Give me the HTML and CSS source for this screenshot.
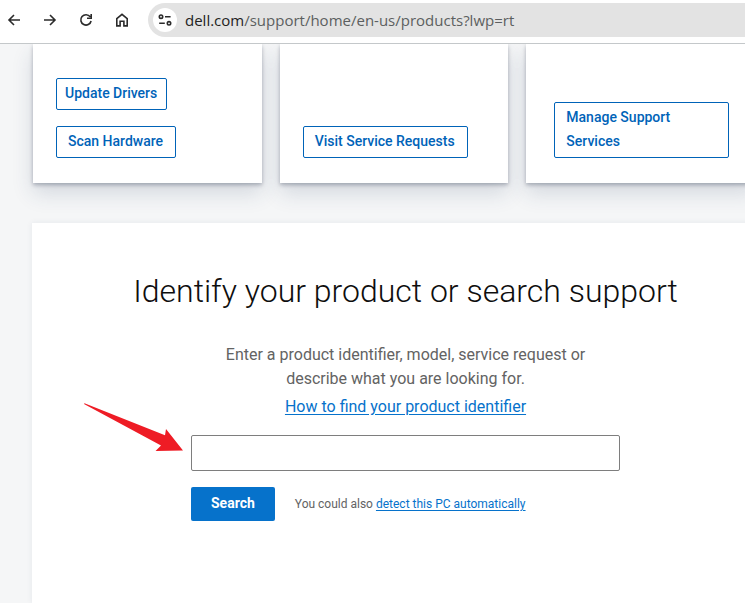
FILE: index.html
```html
<!DOCTYPE html>
<html lang="en">
  <head>
    <meta charset="UTF-8" />
    <meta name="viewport" content="width=device-width, initial-scale=1.0" />
    <title>Support | Dell US</title>
    <link rel="stylesheet" href="styles.css">
  </head>
  <body>
    <header class="toolbar">
      <button class="nav" aria-label="Back">
        <svg viewBox="0 0 16 16"><path d="M14 8H3M8 3L3 8l5 5" /></svg>
      </button>
      <button class="nav" aria-label="Forward">
        <svg viewBox="0 0 16 16"><path d="M2 8h11M8 3l5 5-5 5" /></svg>
      </button>
      <button class="nav" aria-label="Reload">
        <svg viewBox="0 0 16 16"><path d="M12.2 4.8A5.2 5.2 0 1 0 13.1 9M13.2 2v4.2H9" /></svg>
      </button>
      <button class="nav" aria-label="Home">
        <svg viewBox="0 0 16 16"><path d="M2.8 6.6L8 2.3l5.2 4.3v7.3H9.9V9.3H6.1v4.6H2.8z" /></svg>
      </button>
      <div class="address">
        <button class="site-info" aria-label="View site information">
          <svg viewBox="0 0 16 16"><circle cx="4" cy="4.7" r="1.7" /><path d="M8 4.7h5.6M2.2 11.3h5.6" /><circle cx="12" cy="11.3" r="1.7" /></svg>
        </button>
        <span class="url"><b>dell.com</b>/support/home/en-us/products?lwp=rt</span>
      </div>
    </header>
    <main class="page">
      <section class="cards">
        <div class="card">
          <button class="outline tight">Update Drivers</button>
          <button class="outline">Scan Hardware</button>
        </div>
        <div class="card">
          <button class="outline">Visit Service Requests</button>
        </div>
        <div class="card wide">
          <button class="outline">Manage Support Services</button>
        </div>
      </section>
      <section class="panel">
        <h1>Identify your product or search support</h1>
        <form class="search">
          <label class="hint" for="product">Enter a product identifier, model, service request or describe what you are looking for.</label>
          <a class="help" href="#">How to find your product identifier</a>
          <div class="field">
            <input type="text" id="product" />
            <svg class="pointer" viewBox="0 0 100 50"><path d="M.5.2L81 32.2 82 26 99 47.5 71.5 48 77 42.5 0 1z" /></svg>
          </div>
          <div class="actions">
            <button class="submit" type="button">Search</button>
            <p>You could also <a href="#">detect this PC automatically</a></p>
          </div>
        </form>
      </section>
    </main>
  </body>
</html>
```
FILE: styles.css
```css
* {
  box-sizing: border-box;
}
body {
  margin: 0;
  min-height: 100vh;
  display: flex;
  flex-direction: column;
  overflow: hidden;
  font-family: Roboto, sans-serif;
  font-size: 16px;
  line-height: 24px;
  color: #636363;
  background-color: #f5f6f7;
}
button {
  font-family: inherit;
  cursor: pointer;
}
a {
  color: #0672cb;
  text-underline-offset: 2px;
}

/* browser bar */
.toolbar {
  position: relative;
  display: flex;
  align-items: center;
  gap: 20px;
  height: 44px;
  padding: 0 0 4px 6px;
  background-color: #fff;
  border-bottom: 1px solid #c4c8ca;
}
.nav {
  flex: none;
  width: 16px;
  height: 16px;
  padding: 0;
  border: 0;
  background: none;
}
.toolbar svg {
  display: block;
  width: 16px;
  height: 16px;
  fill: none;
  stroke: #2b2b2b;
  stroke-width: 1.6;
}
.address {
  flex: 1;
  display: flex;
  align-items: center;
  gap: 8px;
  height: 34px;
  margin-left: -2px;
  padding-left: 5px;
  background-color: #e3e3e3;
  border-radius: 17px 0 0 17px;
}
.site-info {
  display: flex;
  align-items: center;
  justify-content: center;
  width: 24px;
  height: 24px;
  padding: 0;
  border: 0;
  border-radius: 50%;
  background-color: #fff;
}
.url {
  font-family: "Open Sans", sans-serif;
  font-size: 15px;
  color: #5c5f60;
}
.url b {
  font-weight: 400;
  color: #222;
}

/* support page, runs past the right edge of narrow windows */
.page {
  flex: 1;
  display: flex;
  flex-direction: column;
  gap: 40px;
  margin: 0 -34px 0 32px;
}
.cards {
  display: grid;
  grid-template-columns: repeat(3, 1fr);
  gap: 18px;
  margin: 0 24px 0 1px;
}
.card {
  display: flex;
  flex-direction: column;
  align-items: flex-start;
  justify-content: flex-end;
  gap: 16px;
  min-height: 139px;
  padding: 25px 23px;
  background-color: #fff;
  box-shadow: 0 2px 4px rgba(0, 16, 40, 0.28), 0 10px 20px rgba(40, 60, 100, 0.16);
}
.wide {
  padding: 25px 26px 25px 28px;
}
.outline {
  padding: 2px 12px 4px 11px;
  font-size: 14px;
  font-weight: 500;
  line-height: 24px;
  text-align: left;
  color: #0063b8;
  background-color: #fff;
  border: 1px solid #0063b8;
  border-radius: 2px;
}
.tight {
  padding: 2px 9px 4px 8px;
}
.panel {
  flex: 1;
  padding: 48px 24px;
  text-align: center;
  background-color: #fff;
  box-shadow: 0 0 6px rgba(40, 60, 100, 0.08);
}
h1 {
  margin: 0 0 32px;
  font-size: 32px;
  font-weight: 300;
  line-height: 40px;
  color: #0e0e0e;
}
.search {
  display: flex;
  flex-direction: column;
  align-items: center;
  max-width: 429px;
  margin: 0 auto;
}
.hint {
  max-width: 376px;
  margin-bottom: 4px;
}
.field {
  position: relative;
  width: 100%;
  margin: 16px 0;
}
.field input {
  display: block;
  width: 100%;
  height: 36px;
  padding: 0 12px;
  font: inherit;
  background-color: #fff;
  border: 1px solid #7e7e7e;
  border-radius: 2px;
}
.pointer {
  position: absolute;
  right: 100%;
  bottom: 18px;
  width: 100px;
  height: 50px;
  margin-right: 7px;
  fill: #ee1c25;
}
.actions {
  display: flex;
  align-items: center;
  gap: 20px;
  width: 100%;
}
.actions p {
  margin: 0;
  font-size: 12px;
}
.submit {
  height: 34px;
  padding: 0 20px 2px;
  font-size: 14px;
  font-weight: 700;
  color: #fff;
  background-color: #0672cb;
  border: 0;
  border-radius: 2px;
}
```
